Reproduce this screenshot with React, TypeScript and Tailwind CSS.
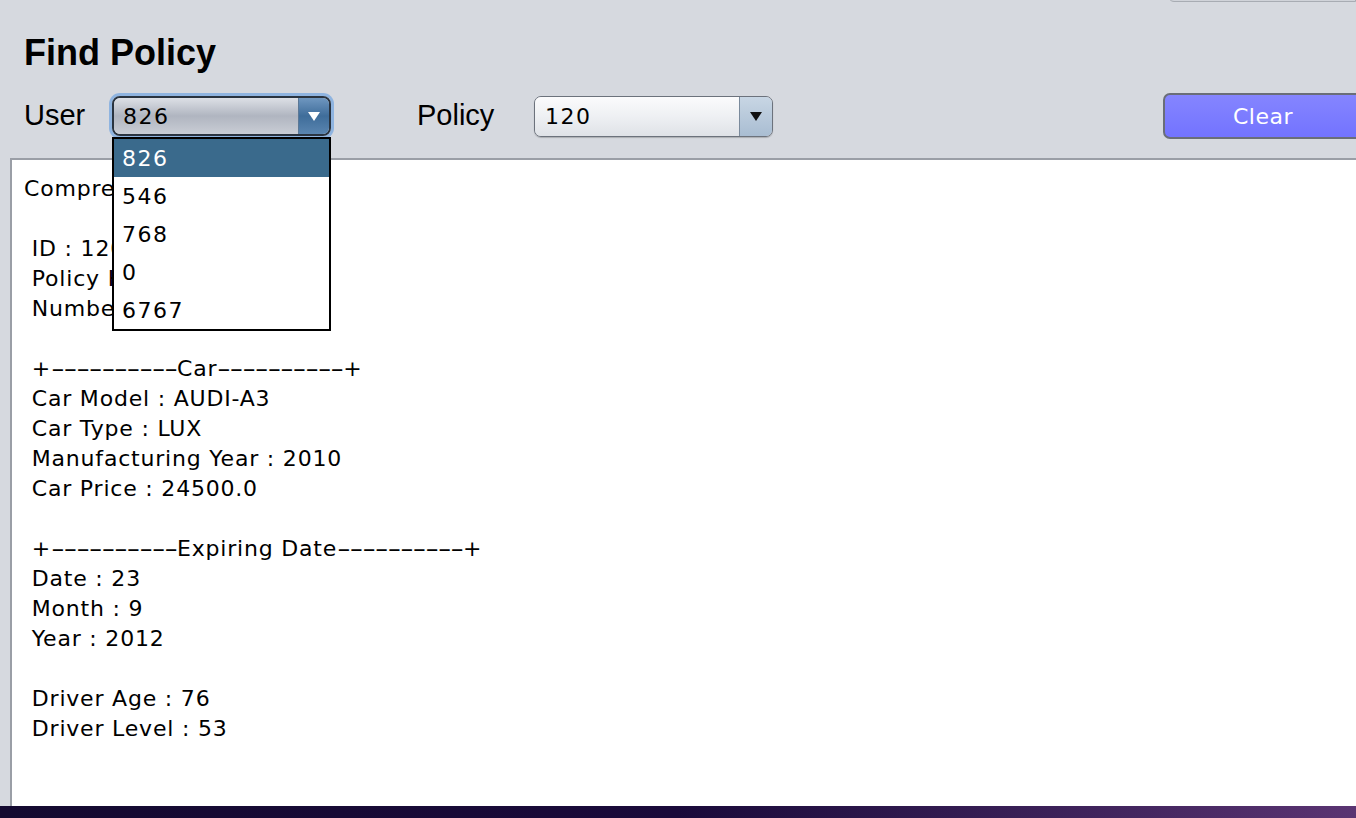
import React from 'react';

const lucida = "font-['DejaVu_Sans',_'Lucida_Grande',_sans-serif]";
const helv = "font-['Liberation_Sans',_Arial,_sans-serif]";

const userOptions = ['826', '546', '768', '0', '6767'];

const dashes = '----------';

const policyLines = [
  'Comprehensive Policy',
  '',
  ' ID : 120',
  ' Policy Holder : 826',
  ' Number of Claims : 0',
  '',
  ' +' + dashes + 'Car' + dashes + '+',
  ' Car Model : AUDI-A3',
  ' Car Type : LUX',
  ' Manufacturing Year : 2010',
  ' Car Price : 24500.0',
  '',
  ' +' + dashes + 'Expiring Date' + dashes + '+',
  ' Date : 23',
  ' Month : 9',
  ' Year : 2012',
  '',
  ' Driver Age : 76',
  ' Driver Level : 53',
];

// Java's font draws the separator dashes much wider, so stretch the runs
function Line({ text }: { text: string }) {
  const parts = text.split(/(-{2,})/);
  return (
    <>
      {parts.map((p, i) =>
        /^-{2,}$/.test(p) ? (
          <span key={i} className="inline-block w-[126px]">
            <span className="inline-block origin-left scale-x-[1.74] tracking-[-0.7px]">{p}</span>
          </span>
        ) : (
          <span key={i}>{p}</span>
        )
      )}
    </>
  );
}

function ArrowDown({ color }: { color: string }) {
  return (
    <svg width="12" height="9" viewBox="0 0 12 9">
      <path d="M0 0 L12 0 L6 9 Z" fill={color} />
    </svg>
  );
}

function UserCombo() {
  return (
    <div className="relative shrink-0 w-[219px] h-[40px] rounded-[8px] ring-[3px] ring-[#8fb4e0]">
      <div className="flex h-full rounded-[8px] border-2 border-[#2a3440] overflow-hidden">
        <div className={`flex-1 flex items-center pl-[9px] text-[22px] tracking-[1.5px] text-black bg-gradient-to-b from-[#dde0e6] via-[#b0b5c0] to-[#c9cdd5] ${lucida}`}>
          826
        </div>
        <div className="w-[31px] flex items-center justify-center border-l border-[#5b7896] bg-gradient-to-b from-[#6f97c0] via-[#3f6d9a] to-[#5a85b0]">
          <ArrowDown color="#ffffff" />
        </div>
      </div>
      {/* open popup list */}
      <div className="absolute left-0 top-[41px] w-[219px] bg-white border-2 border-black z-10">
        {userOptions.map((o, i) => (
          <div
            key={o}
            className={`h-[38px] flex items-center pl-[8px] text-[22px] tracking-[1.5px] ${lucida} ${i === 0 ? 'bg-[#3a6a8c] text-white' : 'text-black'}`}
          >
            {o}
          </div>
        ))}
      </div>
    </div>
  );
}

function PolicyCombo() {
  return (
    <div className="flex shrink-0 w-[239px] h-[41px] rounded-[7px] border border-[#6c727c] overflow-hidden shadow-[0_1px_1px_rgba(0,0,0,0.2)]">
      <div className={`flex-1 flex items-center pl-[10px] text-[22px] tracking-[1.5px] text-black bg-gradient-to-b from-[#fbfbfc] via-[#eef0f3] to-[#dfe2e7] ${lucida}`}>
        120
      </div>
      <div className="w-[33px] flex items-center justify-center border-l border-[#7a8a9c] bg-gradient-to-b from-[#c8d6e4] to-[#a9bdd2]">
        <ArrowDown color="#111111" />
      </div>
    </div>
  );
}

export default function App() {
  return (
    <div className="w-[1356px] h-[818px] bg-[#d6d9df] flex flex-col overflow-hidden relative">
      <div className="absolute right-0 top-[-6px] w-[188px] h-[8px] rounded-bl-[6px] border border-[#a8acb3] bg-[#d0d3d9]" />

      {/* Header */}
      <div className="h-[158px] shrink-0 flex flex-col pl-[24px] pt-[33px]">
        <h1 className={`text-[36px] font-bold leading-[40px] text-black ${helv}`}>Find Policy</h1>
        <div className="flex items-center mt-[21px] h-[44px]">
          <span className={`w-[88px] shrink-0 text-[29px] text-black ${helv}`}>User</span>
          <UserCombo />
          <span className={`ml-[86px] w-[117px] shrink-0 text-[29px] text-black ${helv}`}>Policy</span>
          <PolicyCombo />
          <button className={`ml-[390px] shrink-0 w-[200px] h-[46px] rounded-[7px] border-2 border-[#6a6e78] bg-gradient-to-b from-[#8585ff] to-[#7373ff] text-white text-[22px] tracking-[0.5px] ${lucida}`}>
            Clear
          </button>
        </div>
      </div>

      {/* Result area */}
      <div className="flex-1 ml-[10px] border-l-2 border-t-2 border-[#9a9ea6] bg-white pl-[12px] pt-[14px]">
        {policyLines.map((line, i) => (
          <div key={i} className={`h-[30px] leading-[30px] text-[22px] tracking-[0.8px] text-black whitespace-pre ${lucida}`}>
            <Line text={line} />
          </div>
        ))}
      </div>

      {/* desktop strip below the window */}
      <div className="h-[12px] shrink-0 bg-gradient-to-r from-[#140a30] via-[#1a0a3a] to-[#5a3472]" />
    </div>
  );
}
